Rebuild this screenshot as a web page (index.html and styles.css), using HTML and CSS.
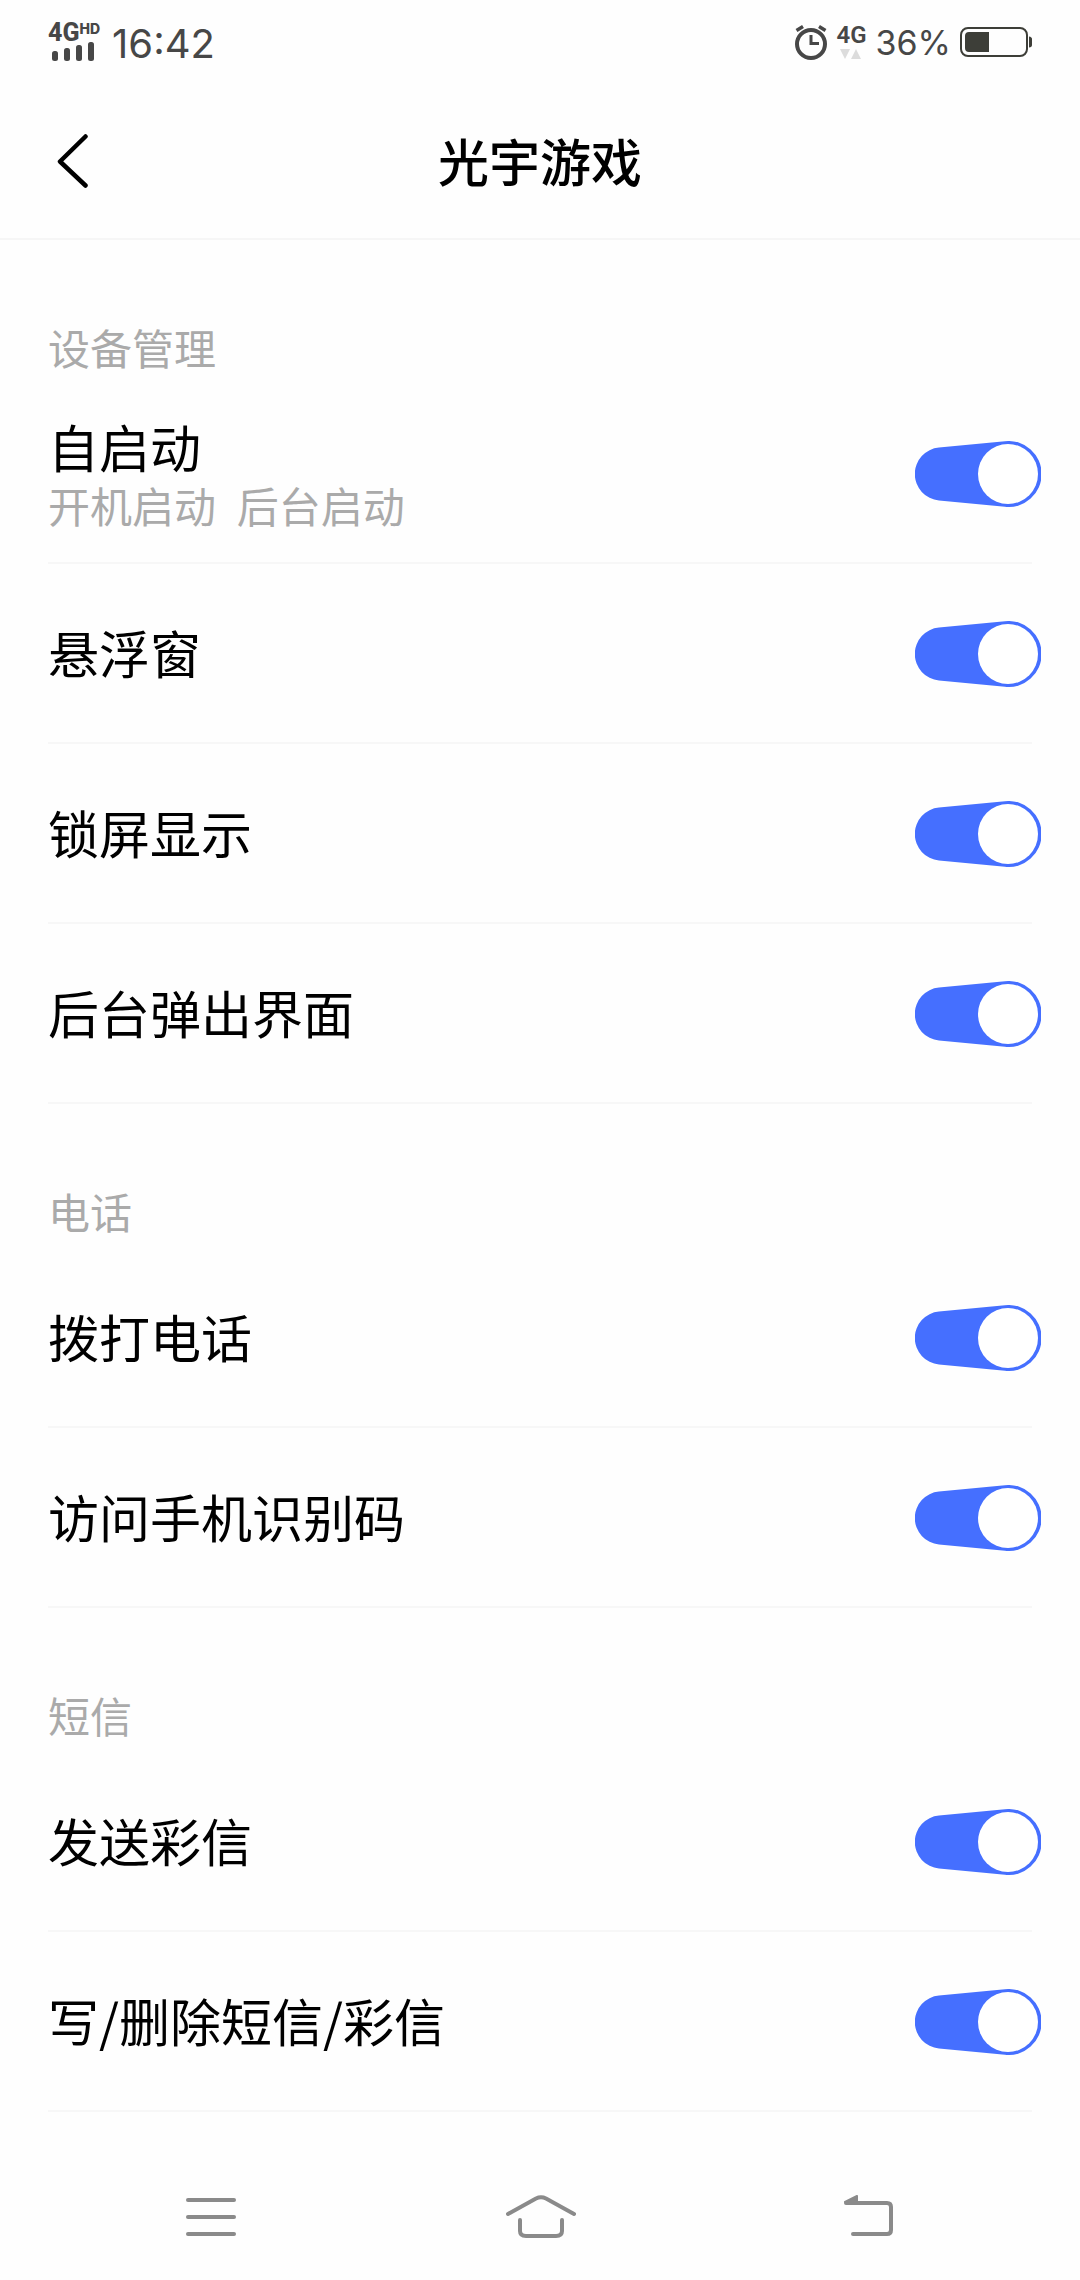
FILE: index.html
```html
<!DOCTYPE html>
<html lang="zh-CN">
<head>
<meta charset="utf-8">
<meta name="viewport" content="width=device-width, initial-scale=1">
<title>光宇游戏</title>
<link rel="stylesheet" href="styles.css">
</head>
<body>
<svg width="0" height="0" class="defs" aria-hidden="true">
  <symbol id="switch" viewBox="0 0 126 66">
    <path class="switch-track" d="M24 6.6 L90 .2 A33 33 0 1 1 90 65.8 L24 59.4 A26.5 26.5 0 0 1 24 6.6Z"/>
    <circle class="switch-knob" cx="93" cy="33" r="30"/>
  </symbol>
</svg>

<div class="status-bar">
  <div class="status-group">
    <div class="signal">
      <div class="network"><span class="network-type">4G</span><span class="network-hd">HD</span></div>
      <svg class="bars" width="42" height="19" viewBox="0 0 42 19" aria-hidden="true">
        <rect x="0" y="9" width="6" height="10" rx="2.5"/>
        <rect x="12" y="6" width="6" height="13" rx="2.5"/>
        <rect x="24" y="3" width="6" height="16" rx="2.5"/>
        <rect x="36" y="0" width="6" height="19" rx="2.5"/>
      </svg>
    </div>
    <span class="time">16:42</span>
  </div>
  <div class="status-group status-right">
    <svg width="32" height="35" viewBox="0 0 32 35" fill="none" stroke="#474747" aria-hidden="true">
      <circle cx="16" cy="19" r="14" stroke-width="4"/>
      <path d="M16 10V18.500H24" stroke-width="3"/>
      <path d="M1.500 5.500L8 1.500M30.500 5.500L24 1.500" stroke-width="3.500"/>
    </svg>
    <div class="data">
      <span class="data-type">4G</span>
      <svg width="22" height="10" viewBox="0 0 22 10" fill="#dcdcdc" aria-hidden="true"><path d="M0 0H10L5 10ZM11 10H21L16 0Z"/></svg>
    </div>
    <span class="percent">36%</span>
    <svg width="72" height="30" viewBox="0 0 72 30" aria-hidden="true">
      <rect x="1" y="1" width="66" height="28" rx="7" fill="none" stroke="#3d3e38" stroke-width="2"/>
      <path d="M29 5V25H9A4 4 0 0 1 5 21V9A4 4 0 0 1 9 5ZM69 9.500Q72 10 72 12V18Q72 20 69 20.500Z" fill="#3d3e38"/>
    </svg>
  </div>
</div>

<header class="title-bar">
  <button class="back" type="button" aria-label="返回">
    <svg width="32" height="54" viewBox="0 0 32 54" fill="none" stroke="#000" stroke-width="4.500" stroke-linecap="round" stroke-linejoin="round"><path d="M29.500 2.500L4 27.500L29.500 51.500"/></svg>
  </button>
  <h1 class="title">光宇游戏</h1>
</header>

<main class="settings">
  <section>
    <h2 class="section-title">设备管理</h2>
    <label class="row">
      <span class="row-text with-note">自启动<span class="row-note">开机启动&nbsp; 后台启动</span></span>
      <span class="switch"><input type="checkbox" checked><svg><use href="#switch"/></svg></span>
    </label>
    <label class="row">
      <span class="row-text">悬浮窗</span>
      <span class="switch"><input type="checkbox" checked><svg><use href="#switch"/></svg></span>
    </label>
    <label class="row">
      <span class="row-text">锁屏显示</span>
      <span class="switch"><input type="checkbox" checked><svg><use href="#switch"/></svg></span>
    </label>
    <label class="row">
      <span class="row-text">后台弹出界面</span>
      <span class="switch"><input type="checkbox" checked><svg><use href="#switch"/></svg></span>
    </label>
  </section>
  <section>
    <h2 class="section-title">电话</h2>
    <label class="row">
      <span class="row-text">拨打电话</span>
      <span class="switch"><input type="checkbox" checked><svg><use href="#switch"/></svg></span>
    </label>
    <label class="row">
      <span class="row-text">访问手机识别码</span>
      <span class="switch"><input type="checkbox" checked><svg><use href="#switch"/></svg></span>
    </label>
  </section>
  <section>
    <h2 class="section-title">短信</h2>
    <label class="row">
      <span class="row-text">发送彩信</span>
      <span class="switch"><input type="checkbox" checked><svg><use href="#switch"/></svg></span>
    </label>
    <label class="row">
      <span class="row-text">写/删除短信/彩信</span>
      <span class="switch"><input type="checkbox" checked><svg><use href="#switch"/></svg></span>
    </label>
  </section>
</main>

<nav class="nav-bar">
  <button type="button" aria-label="菜单">
    <svg width="50" height="38" viewBox="0 0 50 38" fill="#8a8a8a"><rect width="50" height="4" rx="2"/><rect y="17" width="50" height="4" rx="2"/><rect y="34" width="50" height="4" rx="2"/></svg>
  </button>
  <button type="button" aria-label="主页">
    <svg width="72" height="44" viewBox="0 0 72 44" fill="none" stroke="#8a8a8a" stroke-width="4" stroke-linecap="round" stroke-linejoin="round"><path d="M4 19L32 3.500Q37 1 42 3.500L70 19M16 25V36Q16 41 22 41H52Q58 41 58 36V25"/></svg>
  </button>
  <button type="button" aria-label="返回">
    <svg width="52" height="44" viewBox="0 0 52 44" fill="none" stroke="#8a8a8a" stroke-width="4" stroke-linecap="round" stroke-linejoin="round"><path d="M3 8H44Q48 8 48 12V35Q48 39 44 39H10"/><path d="M2 7L14 1V8H3Z" fill="#8a8a8a" stroke-width="2"/></svg>
  </button>
</nav>
</body>
</html>
```
FILE: styles.css
```css
* {
  box-sizing: border-box;
}

body {
  margin: 0;
  min-height: 100vh;
  display: flex;
  flex-direction: column;
  background: #fefefe;
  color: #000;
  font-family: "Noto Sans CJK SC", sans-serif;
}

svg {
  display: block;
  flex: none;
}

button {
  padding: 0;
  border: 0;
  background: none;
  cursor: pointer;
}

.defs {
  position: absolute;
}

.status-bar {
  height: 84px;
  padding: 0 48px;
  display: flex;
  justify-content: space-between;
  align-items: center;
  color: #474747;
  font-family: Inter, sans-serif;
}

.status-group {
  display: flex;
  align-items: center;
  gap: 12px;
}

.status-right {
  gap: 9px;
}

.network {
  display: flex;
  align-items: flex-start;
  line-height: 20px;
}

.network-type,
.data-type {
  font-family: Roboto, sans-serif;
  font-size: 25px;
  font-weight: 800;
  line-height: 18px;
}

.data-type {
  font-size: 24px;
  font-weight: 600;
}

.network-hd {
  font-size: 14px;
  font-weight: 800;
  line-height: 10px;
}

.bars {
  margin-left: 4px;
  fill: #474747;
}

.time {
  font-size: 40px;
  line-height: 48px;
  padding-top: 4px;
}

.data {
  display: flex;
  flex-direction: column;
  align-items: center;
  gap: 5px;
}

.percent {
  font-size: 34px;
  line-height: 42px;
  padding-top: 2px;
}

.title-bar {
  height: 156px;
  padding: 0 56px;
  display: grid;
  grid-template-columns: 1fr auto 1fr;
  align-items: center;
  border-bottom: 2px solid #f6f6f6;
}

.back {
  justify-self: start;
}

.title {
  margin: 0;
  padding-bottom: 2px;
  font-size: 51px;
  font-weight: 500;
  line-height: 76px;
}

.settings {
  flex: 1;
  padding: 0 48px;
}

.section-title {
  margin: 0;
  padding: 77px 0 7px;
  color: #aaa;
  font-size: 42px;
  font-weight: 400;
  line-height: 60px;
}

.row {
  height: 180px;
  padding-top: 2px;
  display: flex;
  align-items: center;
  justify-content: space-between;
  border-bottom: 2px solid #f7f7f7;
}

.row-text {
  padding-bottom: 4px;
  font-size: 51px;
  line-height: 60px;
}

.with-note {
  padding: 6px 0 0;
}

.row-note {
  display: block;
  margin-top: 3px;
  color: #aaa;
  font-family: Roboto, "Noto Sans CJK SC", sans-serif;
  font-size: 42px;
}

.switch {
  position: relative;
  width: 126px;
  height: 66px;
  margin-right: -9px;
}

.switch input {
  position: absolute;
  inset: 0;
  width: 100%;
  height: 100%;
  margin: 0;
  appearance: none;
  cursor: pointer;
}

.switch svg {
  width: 100%;
  height: 100%;
  color: #c8c8c8;
}

.switch input:checked + svg {
  color: #456fff;
}

.switch-track {
  fill: currentColor;
}

.switch-knob {
  fill: #fff;
}

.nav-bar {
  height: 126px;
  padding: 0 46px;
  display: grid;
  grid-template-columns: repeat(3, 1fr);
}

.nav-bar button {
  display: flex;
  align-items: center;
  justify-content: center;
}
```
